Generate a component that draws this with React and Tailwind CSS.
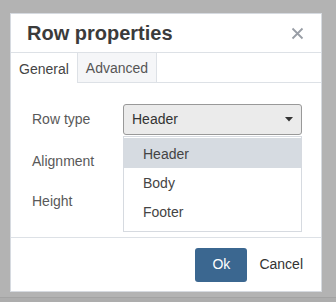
import React from 'react';

const font = { fontFamily: '"Liberation Sans", Arial, sans-serif' };

function CloseIcon() {
  return (
    <svg width="13" height="13" viewBox="0 0 13 13" className="text-[#999ea6]">
      <path d="M1.5 1.5 L11.5 11.5 M11.5 1.5 L1.5 11.5" stroke="currentColor" strokeWidth="1.8" />
    </svg>
  );
}

function Caret() {
  return (
    <svg width="8" height="5" viewBox="0 0 8 5">
      <path d="M0 0 H8 L4 4.5 Z" fill="#333" />
    </svg>
  );
}

export default function App() {
  const items = ['Header', 'Body', 'Footer'];
  return (
    <div className="w-[336px] h-[302px] bg-[#b3b3b3] flex flex-col overflow-hidden" style={font}>
      <div className="ml-[10px] mt-[13px] w-[312px] h-[279px] bg-white border border-[#d6dae0] flex flex-col">
        <div className="h-[39px] flex items-center justify-between pl-4 pr-[17px] border-b border-[#dde1e6]">
          <h1 className="text-[20px] font-bold text-[#3b3b3b] leading-none">Row properties</h1>
          <CloseIcon />
        </div>

        <div className="h-[30px] flex border-b border-[#dde1e6] text-[14px]">
          <div className="w-[66px] flex items-center justify-center pt-[2px] text-[#444] bg-white h-[30px]">General</div>
          <div className="w-[80px] flex items-center justify-center pt-[2px] text-[#555] bg-[#f5f6f8] border-x border-[#dde1e6]">
            Advanced
          </div>
        </div>

        <div className="flex-1 pl-[21px] pr-[19px] pt-[21px] flex flex-col text-[14px] border-b border-[#dde1e6]">
          <div className="flex items-center h-[31px]">
            <span className="w-[91px] text-[#595959]">Row type</span>
            <div className="relative flex-1">
              <div className="h-[31px] bg-[#ebebeb] border border-[#999] rounded-[3px] flex items-center justify-between pl-[8px] pr-[8px] text-[#333]">
                <span>Header</span>
                <Caret />
              </div>
              <div className="absolute left-0 right-0 top-[32px] h-[96px] bg-white border border-[#d6dae0] pt-[1px] z-10">
                {items.map((it, i) => (
                  <div
                    key={it}
                    className={
                      'flex items-center pl-[19px] pt-[2px] text-[#444] ' +
                      (i === 0 ? 'bg-[#d6dbe1] h-[30px]' : 'h-[29px]')
                    }
                  >
                    {it}
                  </div>
                ))}
              </div>
            </div>
          </div>
          <div className="flex items-center h-[31px] mt-[11px]">
            <span className="w-[91px] text-[#595959]">Alignment</span>
          </div>
          <div className="flex items-center h-[31px] mt-[9px]">
            <span className="w-[91px] text-[#595959]">Height</span>
          </div>
        </div>

        <div className="h-[53px] flex items-center justify-end pr-[18px]">
          <button className="w-[52px] h-[34px] rounded-[3px] bg-[#3b6790] text-white text-[14px]">Ok</button>
          <span className="ml-[12px] text-[14px] text-[#333]">Cancel</span>
        </div>
      </div>
      <div className="mt-[5px] h-px bg-[#a3a3a3]" />
      <div className="flex-1 bg-[#adadad]" />
    </div>
  );
}
